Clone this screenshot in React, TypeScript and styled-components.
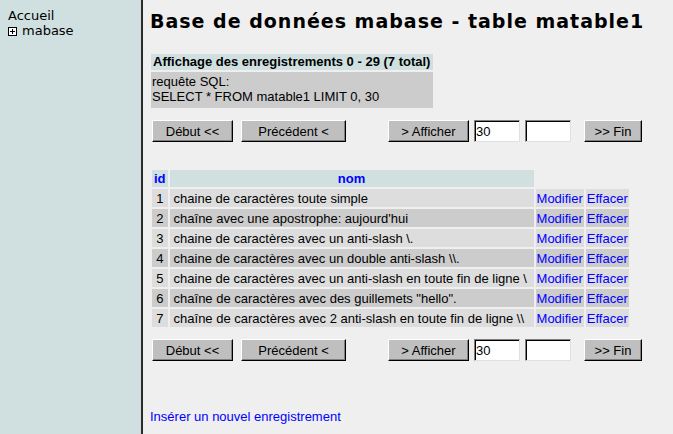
import styled, { createGlobalStyle } from "styled-components";

type Row = { id: number; nom: string };

const rows: Row[] = [
    { id: 1, nom: "chaine de caractères toute simple" },
    { id: 2, nom: "chaîne avec une apostrophe: aujourd'hui" },
    { id: 3, nom: "chaine de caractères avec un anti-slash \\." },
    { id: 4, nom: "chaine de caractères avec un double anti-slash \\\\." },
    { id: 5, nom: "chaine de caractères avec un anti-slash en toute fin de ligne \\" },
    { id: 6, nom: "chaîne de caractères avec des guillemets \"hello\"." },
    { id: 7, nom: "chaîne de caractères avec 2 anti-slash en toute fin de ligne \\\\" },
];

const Pager = ({ top }: { top: number }) => (
    <StyledPager $top={top}>
        <StyledButton type="button" $width={81}>Début &lt;&lt;</StyledButton>
        <StyledButton type="button" $width={105} $gap={8}>Précédent &lt;</StyledButton>
        <StyledButton type="button" $width={81} $gap={42}>&gt; Afficher</StyledButton>
        <StyledInput type="text" defaultValue="30" $gap={5} />
        <StyledInput type="text" defaultValue="" $gap={5} />
        <StyledButton type="button" $width={58} $gap={13}>&gt;&gt; Fin</StyledButton>
    </StyledPager>
);

const App = () => {
    return <>
        <GlobalStyle />
        <StyledPage>
            <StyledSidebar>
                <StyledNavLink>Accueil</StyledNavLink>
                <StyledNavItem>
                    <svg width="9" height="9" viewBox="0 0 9 9">
                        <rect x="0.5" y="0.5" width="8" height="8" fill="#fff" stroke="#000" />
                        <path d="M2 4.5h5M4.5 2v5" stroke="#000" />
                    </svg>
                    <span>mabase</span>
                </StyledNavItem>
            </StyledSidebar>
            <StyledMain>
                <StyledTitle>Base de données mabase - table matable1</StyledTitle>
                <StyledInfo>
                    <StyledInfoHeader>Affichage des enregistrements 0 - 29 (7 total)</StyledInfoHeader>
                    <StyledInfoBody>
                        requête SQL:<br />
                        SELECT * FROM matable1 LIMIT 0, 30
                    </StyledInfoBody>
                </StyledInfo>
                <Pager top={12} />
                <StyledTable>
                    <thead>
                        <tr>
                            <StyledTh>id</StyledTh>
                            <StyledTh $width={360}>nom</StyledTh>
                        </tr>
                    </thead>
                    <tbody>
                        {rows.map(r => (
                            <tr key={r.id}>
                                <StyledTd $even={r.id % 2 === 0} $center>{r.id}</StyledTd>
                                <StyledTd $even={r.id % 2 === 0}>{r.nom}</StyledTd>
                                <StyledTd $even={r.id % 2 === 0} $tight><StyledLink href="#">Modifier</StyledLink></StyledTd>
                                <StyledTd $even={r.id % 2 === 0} $tight><StyledLink href="#">Effacer</StyledLink></StyledTd>
                            </tr>
                        ))}
                    </tbody>
                </StyledTable>
                <Pager top={10} />
                <StyledFooterLink href="#">Insérer un nouvel enregistrement</StyledFooterLink>
            </StyledMain>
        </StyledPage>
    </>
}
export default App;

const GlobalStyle = createGlobalStyle`
    html, body {
        margin: 0;
        padding: 0;
        background-color: #EFEFEF;
    }
`
const StyledPage = styled.div`
    display: flex;
    height: 434px;
    width: 673px;
    overflow: hidden;
`
const StyledSidebar = styled.div`
    width: 143px;
    flex-shrink: 0;
    box-sizing: border-box;
    background-color: #D0E0E0;
    border-right: 2px solid #2A2A2A;
    padding: 8px 0 0 8px;
    font-family: "DejaVu Sans", Verdana, sans-serif;
    font-size: 13px;
    line-height: 15px;
    color: #000000;
`
const StyledNavLink = styled.div``
const StyledNavItem = styled.div`
    display: flex;
    align-items: center;
    gap: 5px;
    svg {
        margin-top: 1px;
    }
`
const StyledMain = styled.div`
    flex: 1;
    padding: 8px 0 0 7px;
    font-family: "Liberation Sans", Arial, sans-serif;
    font-size: 13px;
    color: #000000;
`
const StyledTitle = styled.h1`
    margin: 0 0 20px;
    font-family: "DejaVu Sans", Verdana, sans-serif;
    font-weight: 700;
    font-size: 19px;
    letter-spacing: 1px;
    line-height: 26px;
`
const StyledInfo = styled.div`
    width: 282px;
    margin-left: 1px;
`
const StyledInfoHeader = styled.div`
    background-color: #D0E0E0;
    font-weight: 700;
    font-size: 13px;
    line-height: 16px;
    padding-left: 2px;
    margin-bottom: 2px;
    white-space: nowrap;
`
const StyledInfoBody = styled.div`
    background-color: #CCCCCC;
    line-height: 15px;
    padding: 2px 1px 4px;
`
const StyledPager = styled.div<{ $top: number }>`
    display: flex;
    align-items: center;
    margin: ${p => p.$top}px 0 0 2px;
    height: 22px;
`
const StyledButton = styled.button<{ $width: number; $gap?: number }>`
    width: ${p => p.$width}px;
    height: 22px;
    margin-left: ${p => p.$gap ?? 0}px;
    padding: 0;
    background-color: #BFBFBF;
    border: 1px solid;
    border-color: #FFFFFF #000000 #000000 #FFFFFF;
    box-shadow: inset -1px -1px 0 #808080;
    font-family: "Liberation Sans", Arial, sans-serif;
    font-size: 13px;
    color: #000000;
`
const StyledInput = styled.input<{ $gap?: number }>`
    width: 46px;
    height: 22px;
    box-sizing: border-box;
    margin: 0 0 0 ${p => p.$gap ?? 0}px;
    padding: 0 1px;
    background-color: #FFFFFF;
    border: 1px solid;
    border-color: #808080 #E0E0E0 #E0E0E0 #808080;
    box-shadow: inset 1px 1px 0 #000000;
    font-family: "Liberation Sans", Arial, sans-serif;
    font-size: 13px;
    color: #000000;
    outline: 0;
`
const StyledTable = styled.table`
    margin: 26px 0 0;
    border-spacing: 2px;
    font-size: 13px;
`
const StyledTh = styled.th<{ $width?: number }>`
    background-color: #D0E0E0;
    color: #0000FF;
    font-size: 13px;
    font-weight: 700;
    height: 17px;
    padding: 0 2px;
    ${p => p.$width ? `width: ${p.$width}px;` : ""}
`
const StyledTd = styled.td<{ $even?: boolean; $center?: boolean; $tight?: boolean }>`
    background-color: ${p => p.$even ? "#CCCCCC" : "#DDDDDD"};
    height: 18px;
    padding: 0 ${p => p.$tight ? "1px" : "4px"};
    text-align: ${p => p.$center ? "center" : "left"};
    white-space: nowrap;
`
const StyledLink = styled.a`
    color: #0000FF;
    text-decoration: none;
`
const StyledFooterLink = styled.a`
    display: block;
    margin-top: 48px;
    color: #0000FF;
    text-decoration: none;
    font-size: 13px;
`
